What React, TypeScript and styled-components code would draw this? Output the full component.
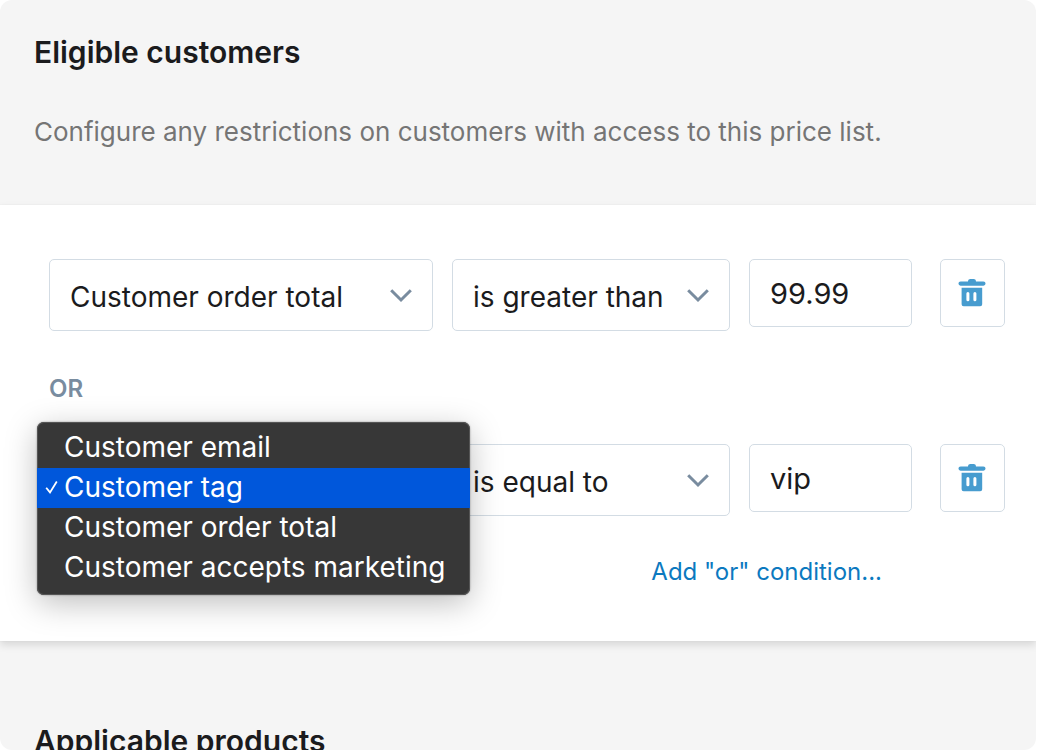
import React from "react";
import styled, { createGlobalStyle } from "styled-components";

const GlobalStyle = createGlobalStyle`
  *, *::before, *::after { box-sizing: border-box; }
  body {
    margin: 0;
    background: #ffffff;
    color: #1b1b1d;
    font-family: Inter, "Liberation Sans", sans-serif;
    font-size: 28px;
  }
`;

const Page = styled.main`
  height: 100vh;
  margin-right: 2px;
  overflow: hidden;
  border-radius: 12px;
  background: #f5f5f5;
`;

const SectionHeader = styled.header`
  padding: 32px 34px 0;
`;

const IntroHeader = styled(SectionHeader)`
  padding-bottom: 53px;
`;

const NextHeader = styled(SectionHeader)`
  padding-top: 80px;
`;

const Title = styled.h2`
  margin: 0;
  font-size: 30px;
  line-height: 40px;
  font-weight: 600;
`;

const Description = styled.p`
  margin: 40px 0 0;
  color: #757575;
  font-size: 26px;
  line-height: 40px;
`;

const Panel = styled.form`
  padding: 54px 31px 49px 49px;
  background: #ffffff;
  box-shadow: 0 0 1px rgba(0, 0, 0, 0.08), 0 4px 8px rgba(0, 0, 0, 0.12);
`;

const ConditionRow = styled.div`
  display: grid;
  grid-template-columns: 384fr 278fr 172fr 65px;
  column-gap: 19px;
  align-items: start;
`;

const Field = styled.div`
  position: relative;
  min-width: 0;
`;

const Select = styled.select`
  display: block;
  width: 100%;
  height: 72px;
  padding: 4px 56px 0 20px;
  appearance: none;
  border: 1px solid #d3dce4;
  border-radius: 5px;
  background: #ffffff;
  color: inherit;
  font: inherit;
`;

const SelectArrow = styled.svg`
  position: absolute;
  top: 28px;
  right: 20px;
  width: 24px;
  height: 16px;
  pointer-events: none;
`;

const TextInput = styled.input`
  display: block;
  width: 100%;
  height: 68px;
  padding: 0 20px;
  border: 1px solid #d3dce4;
  border-radius: 5px;
  background: #ffffff;
  color: inherit;
  font: inherit;
  font-size: 29px;
`;

const ValueField = styled(Field)`
  margin-right: 9px;
`;

const RemoveButton = styled.button`
  display: grid;
  place-items: center;
  height: 68px;
  padding: 0;
  border: 1px solid #d3dce4;
  border-radius: 5px;
  background: #ffffff;
  cursor: pointer;
`;

const Separator = styled.p`
  margin: 42px 0 40px;
  color: #798c9f;
  font-size: 24px;
  line-height: 31px;
  font-weight: 600;
`;

const Menu = styled.ul`
  position: absolute;
  z-index: 2;
  top: -22px;
  left: -12px;
  width: 433px;
  margin: 0;
  padding: 6px 0 7px;
  list-style: none;
  border-radius: 7px;
  background: #373737;
  box-shadow: 0 0 0 1px #555555 inset, 0 0 2px rgba(0, 0, 0, 0.4), 0 8px 32px rgba(0, 0, 0, 0.26);
`;

const MenuItem = styled.li<{ $active?: boolean }>`
  display: grid;
  grid-template-columns: 27px 1fr;
  align-items: center;
  height: 40px;
  padding-bottom: 2px;
  line-height: 38px;
  background: ${({ $active }) => ($active ? "#0057db" : "transparent")};
  color: #ffffff;
  white-space: nowrap;
`;

const MenuLabel = styled.span`
  grid-column: 2;
`;

const CheckMark = styled.svg`
  grid-row: 1;
  width: 14px;
  height: 14px;
  margin-left: 8px;
`;

const Actions = styled.div`
  display: flex;
  justify-content: flex-end;
  margin-top: 36px;
  padding-right: 123px;
`;

const AddLink = styled.a`
  color: #0c79bf;
  font-size: 24px;
  line-height: 40px;
  text-decoration: none;
`;

const Arrow = () => (
  <SelectArrow viewBox="0 0 24 16" fill="none" aria-hidden="true">
    <path d="M2.2 3.2 12 13l9.8-9.8" stroke="#798c9f" strokeWidth="3" />
  </SelectArrow>
);

const Trash = () => (
  <svg width="29" height="28" viewBox="0 0 29 28" aria-hidden="true">
    <path
      fill="#479ccf"
      d="M2.6 2.4H10C10.2.8 11 0 12.4 0h3.2C17 0 17.8.8 18 2.4h7.4a2.15 2.15 0 0 1 0 4.3H2.6a2.15 2.15 0 0 1 0-4.3Z"
    />
    <path
      fill="#479ccf"
      fillRule="evenodd"
      d="M3.6 8.8h20.6v16.4a2 2 0 0 1-2 2H5.6a2 2 0 0 1-2-2V8.8Zm6.3 4.2a1.5 1.5 0 0 0-1.5 1.5v6.3a1.5 1.5 0 0 0 3 0v-6.3a1.5 1.5 0 0 0-1.5-1.5Zm7 0a1.5 1.5 0 0 0-1.5 1.5v6.3a1.5 1.5 0 0 0 3 0v-6.3a1.5 1.5 0 0 0-1.5-1.5Z"
    />
  </svg>
);

const customerFields = [
  "Customer email",
  "Customer tag",
  "Customer order total",
  "Customer accepts marketing",
];
const operators = ["is equal to", "is greater than"];

type ConditionProps = {
  field: string;
  operator: string;
  value: string;
  menuOpen?: boolean;
};

function Condition({ field, operator, value, menuOpen }: ConditionProps) {
  return (
    <ConditionRow>
      <Field>
        <Select aria-label="Customer field" defaultValue={field}>
          {customerFields.map((name) => (
            <option key={name}>{name}</option>
          ))}
        </Select>
        <Arrow />
        {menuOpen && (
          <Menu role="listbox" aria-label="Customer field options">
            {customerFields.map((name) => (
              <MenuItem key={name} role="option" aria-selected={name === field} $active={name === field}>
                {name === field && (
                  <CheckMark viewBox="0 0 14 14" fill="none" aria-hidden="true">
                    <path d="m1.2 7.8 3.8 4.6L11.8 1.6" stroke="#ffffff" strokeWidth="1.8" />
                  </CheckMark>
                )}
                <MenuLabel>{name}</MenuLabel>
              </MenuItem>
            ))}
          </Menu>
        )}
      </Field>
      <Field>
        <Select aria-label="Operator" defaultValue={operator}>
          {operators.map((name) => (
            <option key={name}>{name}</option>
          ))}
        </Select>
        <Arrow />
      </Field>
      <ValueField>
        <TextInput aria-label="Value" defaultValue={value} />
      </ValueField>
      <RemoveButton type="button" aria-label="Remove condition">
        <Trash />
      </RemoveButton>
    </ConditionRow>
  );
}

export default function App() {
  return (
    <>
      <GlobalStyle />
      <Page>
        <IntroHeader>
          <Title>Eligible customers</Title>
          <Description>Configure any restrictions on customers with access to this price list.</Description>
        </IntroHeader>
        <Panel>
          <Condition field="Customer order total" operator="is greater than" value="99.99" />
          <Separator>OR</Separator>
          <Condition field="Customer tag" operator="is equal to" value="vip" menuOpen />
          <Actions>
            <AddLink href="#add-condition">Add "or" condition...</AddLink>
          </Actions>
        </Panel>
        <NextHeader>
          <Title>Applicable products</Title>
        </NextHeader>
      </Page>
    </>
  );
}
